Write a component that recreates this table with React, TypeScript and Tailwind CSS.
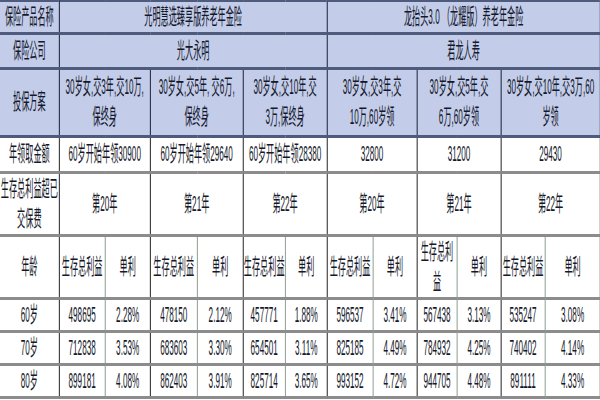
import React from "react";

// header rows share one look, body rows another
const head =
  "bg-[#c3cdea] border-b-[3px] border-b-[#4f5b7c] border-r-[3px] border-r-[#2a3149] text-center align-middle p-0";
const body =
  "bg-white border-b-[3px] border-b-[#8c8c8c] border-r-[3px] border-r-[#3a3a3a] text-center align-middle p-0";
const split = "border-r-[#9aa89c]";

const plansTop = [
  ["30岁女,交3年,交10万,", "保终身"],
  ["30岁女,交5年, 交6万,", "保终身"],
  ["30岁女,交10年,交", "3万,保终身"],
  ["30岁女,交3年,交", "10万,60岁领"],
  ["30岁女,交5年,交", "6万,60岁领"],
  ["30岁女,交10年,交3万,60", "岁领"],
];

const yearly = ["60岁开始年领30900", "60岁开始年领29640", "60岁开始年领28380", "32800", "31200", "29430"];
const breakEven = ["第20年", "第21年", "第22年", "第20年", "第21年", "第22年"];

const ages: [string, string[]][] = [
  ["60岁", ["498695", "2.28%", "478150", "2.12%", "457771", "1.88%", "596537", "3.41%", "567438", "3.13%", "535247", "3.08%"]],
  ["70岁", ["712838", "3.53%", "683603", "3.30%", "654501", "3.11%", "825185", "4.49%", "784932", "4.25%", "740402", "4.14%"]],
  ["80岁", ["899181", "4.08%", "862403", "3.91%", "825714", "3.65%", "993152", "4.72%", "944705", "4.48%", "891111", "4.33%"]],
];

const widths = [
  "w-[160px]", "w-[124px]", "w-[122px]", "w-[127px]", "w-[124px]", "w-[114px]", "w-[113px]",
  "w-[124px]", "w-[119px]", "w-[108px]", "w-[119px]", "w-[119px]", "w-[149px]",
];

const App = () => {
  return (
    <div className="w-[600px] h-[400px] overflow-hidden bg-white">
      <table
        className="w-[1622px] table-fixed border-collapse origin-top-left scale-x-[0.37] text-[22px] leading-[26px] text-[#15182a] whitespace-nowrap"
        style={{ fontFamily: '"Liberation Sans", "Noto Sans CJK SC", sans-serif' }}
      >
        <colgroup>
          {widths.map((w, i) => (
            <col key={i} className={w} />
          ))}
        </colgroup>
        <tbody>
          <tr className="h-[32px]">
            <td className={`${head} border-t-2 border-t-[#4f5b7c]`}>保险产品名称</td>
            <td colSpan={6} className={`${head} border-t-2 border-t-[#4f5b7c]`}>
              光明慧选臻享版养老年金险
            </td>
            <td colSpan={6} className={`${head} border-t-2 border-t-[#4f5b7c]`}>
              龙抬头3.0 （龙耀版）养老年金险
            </td>
          </tr>
          <tr className="h-[35px]">
            <td className={head}>保险公司</td>
            <td colSpan={6} className={head}>光大永明</td>
            <td colSpan={6} className={head}>君龙人寿</td>
          </tr>
          <tr className="h-[68px]">
            <td className={head}>投保方案</td>
            {plansTop.map((p, i) => (
              <td key={i} colSpan={2} className={`${head} leading-[30px]`}>
                {p[0]}
                <br />
                {p[1]}
              </td>
            ))}
          </tr>
          <tr className="h-[36px]">
            <td className={body}>年领取金额</td>
            {yearly.map((t, i) => (
              <td key={i} colSpan={2} className={body}>
                {t}
              </td>
            ))}
          </tr>
          <tr className="h-[63px]">
            <td className={`${body} leading-[30px]`}>
              生存总利益超已
              <br />
              交保费
            </td>
            {breakEven.map((t, i) => (
              <td key={i} colSpan={2} className={body}>
                {t}
              </td>
            ))}
          </tr>
          <tr className="h-[63px]">
            <td className={body}>年龄</td>
            {[0, 1, 2, 3, 4, 5].map((i) => (
              <React.Fragment key={i}>
                <td className={`${body} ${split}`}>
                  {i === 4 ? (
                    <span className="leading-[30px]">
                      生存总利
                      <br />益
                    </span>
                  ) : (
                    "生存总利益"
                  )}
                </td>
                <td className={body}>单利</td>
              </React.Fragment>
            ))}
          </tr>
          {ages.map(([age, vals]) => (
            <tr key={age} className="h-[33px]">
              <td className={body}>{age}</td>
              {vals.map((v, j) => (
                <td key={j} className={`${body} ${j % 2 === 0 ? split : ""}`}>
                  {v}
                </td>
              ))}
            </tr>
          ))}
        </tbody>
      </table>
    </div>
  );
};

export default App;
